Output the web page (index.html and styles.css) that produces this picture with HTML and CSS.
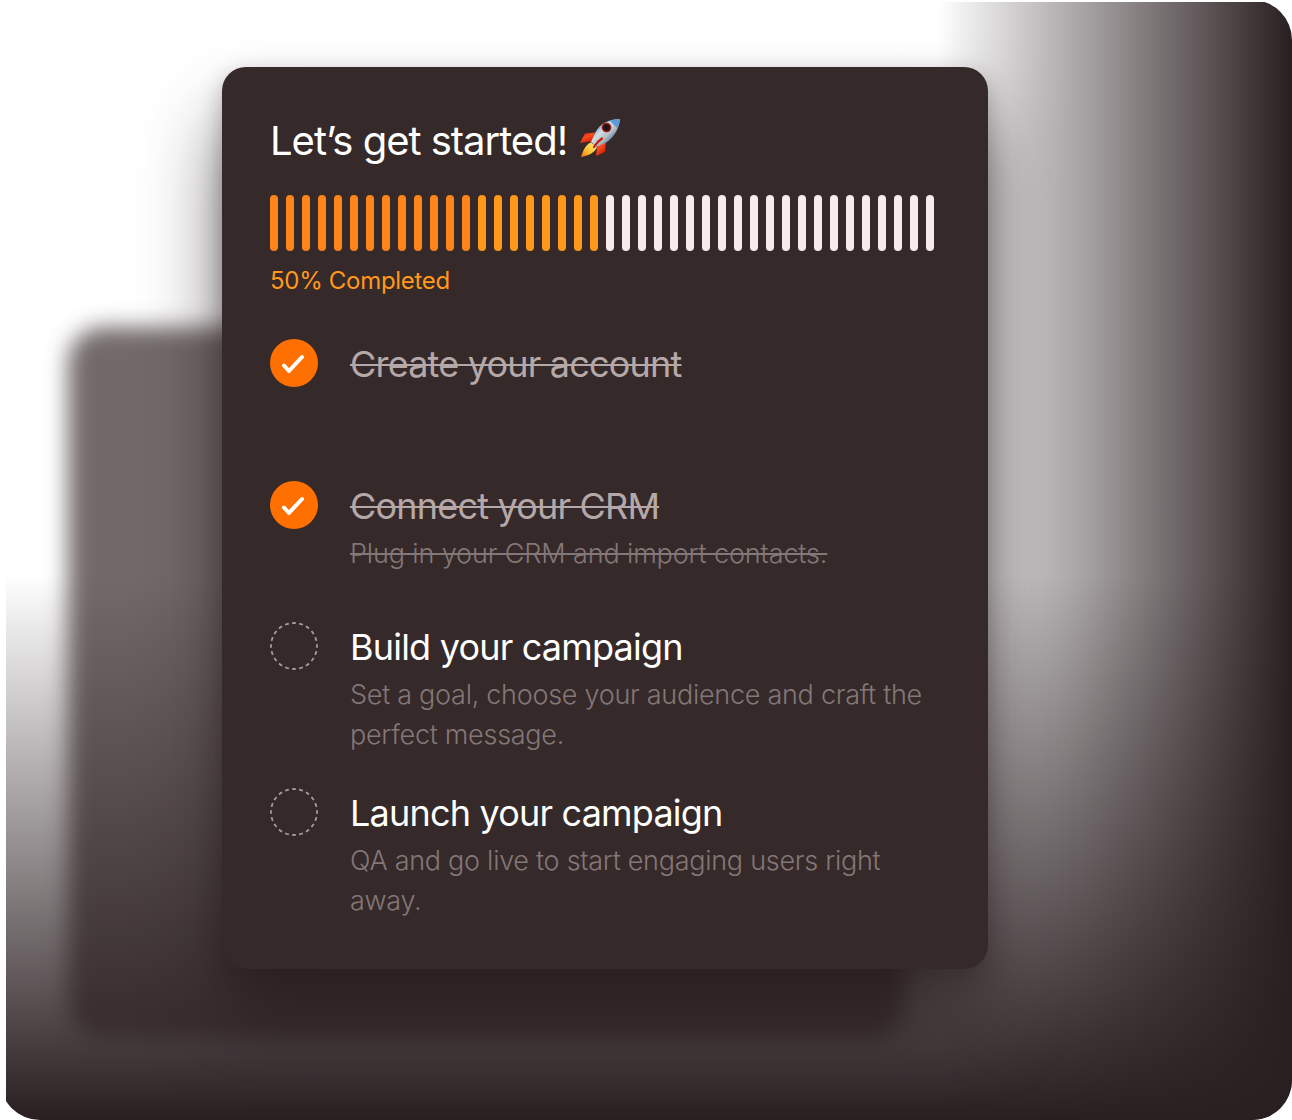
FILE: index.html
```html
<!DOCTYPE html>
<html lang="en">
<head>
    <meta charset="UTF-8">
    <meta name="viewport" content="width=device-width, initial-scale=1.0">
    <title>Let’s get started</title>
    <link rel="stylesheet" href="styles.css">
</head>
<body>
    <div class="stage">
        <div class="backdrop">
            <div class="fade fade-right"></div>
            <div class="fade fade-bottom"></div>
            <div class="ghost-card"></div>
        </div>

        <main class="card">
            <h1 class="title">
                <span>Let’s get started!</span>
                <svg class="rocket" viewBox="0 0 42 40" aria-hidden="true">
                    <defs>
                        <linearGradient id="hull" x1="0" y1="0" x2="1" y2="1">
                            <stop offset="0.15" stop-color="#3f7fc4"/>
                            <stop offset="0.4" stop-color="#d5dde2"/>
                            <stop offset="0.58" stop-color="#b4bdc2"/>
                            <stop offset="0.8" stop-color="#39699e"/>
                        </linearGradient>
                        <linearGradient id="fin" x1="0" y1="0" x2="0.6" y2="1">
                            <stop offset="0" stop-color="#d3200c"/>
                            <stop offset="0.5" stop-color="#ff4a1c"/>
                            <stop offset="1" stop-color="#c41c0a"/>
                        </linearGradient>
                        <linearGradient id="flame" x1="1" y1="0" x2="0" y2="1">
                            <stop offset="0" stop-color="#fff08a"/>
                            <stop offset="0.6" stop-color="#ffc02e"/>
                            <stop offset="1" stop-color="#f5701c"/>
                        </linearGradient>
                    </defs>
                    <path fill="url(#fin)" d="M16 14.500 6 15.500 1 25l9-1.500 3 1.500z"/>
                    <path fill="url(#fin)" d="M27 22l-1 12-9 4 1-8 3-5z"/>
                    <path fill="url(#flame)" d="M12 24.500C6 27 4 33 2 39c6-1 14-4 16-10z"/>
                    <path fill="url(#hull)" d="M41 1C30 1 21 6 16.500 14L12 24l6 5 10-5C36 18 40 10 41 1z"/>
                    <path fill="#5c9bd8" d="M41 1c-3.500 0-7 .6-10 2l7 7c1.800-3 3-6 3-9z"/>
                    <circle cx="27.500" cy="9.500" r="4.800" fill="#9b1712"/>
                    <circle cx="27.500" cy="9.500" r="3.300" fill="#1a1518"/>
                    <path fill="none" stroke="#c41c10" stroke-width="2.200" stroke-linecap="round" d="M23 20.500c-3 2-6 5-8 8.500"/>
                </svg>
            </h1>

            <div class="progress"></div>
            <p class="progress-label">50% Completed</p>

            <ul class="steps">
                <li class="step done">
                    <svg class="marker" viewBox="0 0 48 48">
                        <circle cx="24" cy="24" r="24" fill="#ff7000"/>
                        <path d="M14 26.500l5 5.500L32 18" fill="none" stroke="#fff" stroke-width="4" stroke-linecap="round" stroke-linejoin="round"/>
                    </svg>
                    <div class="step-body">
                        <h2><span>Create your account</span></h2>
                    </div>
                </li>
                <li class="step done">
                    <svg class="marker" viewBox="0 0 48 48">
                        <circle cx="24" cy="24" r="24" fill="#ff7000"/>
                        <path d="M14 26.500l5 5.500L32 18" fill="none" stroke="#fff" stroke-width="4" stroke-linecap="round" stroke-linejoin="round"/>
                    </svg>
                    <div class="step-body">
                        <h2><span>Connect your CRM</span></h2>
                        <p>Plug in your CRM and import contacts.</p>
                    </div>
                </li>
                <li class="step">
                    <svg class="marker" viewBox="0 0 48 48">
                        <circle class="ring" cx="24" cy="24" r="23" pathLength="80"/>
                    </svg>
                    <div class="step-body">
                        <h2>Build your campaign</h2>
                        <p>Set a goal, choose your audience and craft the<br>perfect message.</p>
                    </div>
                </li>
                <li class="step">
                    <svg class="marker" viewBox="0 0 48 48">
                        <circle class="ring" cx="24" cy="24" r="23" pathLength="80"/>
                    </svg>
                    <div class="step-body">
                        <h2>Launch your campaign</h2>
                        <p>QA and go live to start engaging users right<br>away.</p>
                    </div>
                </li>
            </ul>
        </main>
    </div>
    <script src="script.js"></script>
</body>
</html>
```
FILE: styles.css
```css
* {
    margin: 0;
    padding: 0;
    box-sizing: border-box;
}

:root {
    --card: #352929;
    --shade: #291e20;
    --orange: #ff8419;
    --amber: #ff981b;
    --rest: #f7ebec;
    --muted: #847777;
    --done: #b5a8a8;
}

body {
    background: #fff;
    color: #fff;
    font-family: 'Inter', 'Liberation Sans', sans-serif;
    overflow: hidden;
}

.stage {
    position: relative;
    width: 1292px;
    height: 1120px;
    padding: 67px 0 0 222px;
}

.backdrop {
    position: absolute;
    inset: 0;
    border-radius: 40px;
    overflow: hidden;
    clip-path: inset(2px 0 0 6px);
}

.fade {
    position: absolute;
    right: 0;
    bottom: 0;
}

.fade-right {
    top: 0;
    width: 354px;
    background: linear-gradient(to right, rgba(41, 30, 32, 0), var(--shade));
}

.fade-bottom {
    left: 0;
    height: 545px;
    background: linear-gradient(to bottom, rgba(41, 30, 32, 0), var(--shade));
}

.ghost-card {
    position: absolute;
    left: 68px;
    top: 327px;
    width: 837px;
    height: 712px;
    border-radius: 36px;
    background: rgba(47, 34, 36, 0.68);
    filter: blur(11px);
}

.card {
    position: relative;
    width: 766px;
    height: 902px;
    padding: 48px;
    border-radius: 24px;
    background: var(--card);
    box-shadow: 0 8px 22px rgba(35, 24, 26, 0.3), 0 54px 76px rgba(35, 24, 26, 0.62);
}

.title {
    display: flex;
    align-items: center;
    height: 50px;
    font-size: 40px;
    font-weight: 400;
    letter-spacing: -1.02px;
    white-space: nowrap;
}

.rocket {
    width: 42px;
    height: 40px;
    margin: -4px 0 0 12px;
}

.progress {
    display: flex;
    justify-content: space-between;
    height: 56px;
    margin: 30px 6px 0 0;
}

.bar {
    width: 8px;
    border-radius: 4px;
    background: var(--rest);
}

.bar.orange {
    background: var(--orange);
}

.bar.amber {
    background: var(--amber);
}

.progress-label {
    margin-top: 12px;
    font-size: 24px;
    line-height: 36px;
    color: var(--amber);
    letter-spacing: -0.3px;
}

.steps {
    display: grid;
    grid-template-rows: 142px 141px 166px auto;
    margin-top: 35px;
    list-style: none;
}

.step {
    display: flex;
    gap: 32px;
}

.marker {
    flex: none;
    width: 48px;
    height: 48px;
    margin-top: 4.5px;
}

.ring {
    fill: none;
    stroke: #a89c9c;
    stroke-width: 1.8;
    stroke-dasharray: 2.1 1.9;
    stroke-dashoffset: 1.05;
}

.step-body {
    white-space: nowrap;
}

.step h2 {
    height: 58px;
    font-size: 36px;
    font-weight: 400;
    line-height: 60px;
    letter-spacing: -0.8px;
}

.step p {
    font-size: 27px;
    font-weight: 300;
    line-height: 40px;
    letter-spacing: -0.28px;
    color: var(--muted);
}

.step.done p {
    letter-spacing: -0.13px;
}

.done h2 {
    color: var(--done);
}

.done h2 span,
.done p {
    text-decoration: line-through;
    text-decoration-thickness: 2px;
}
```
FILE: script.js
```js
const TOTAL = 42;
const progress = document.querySelector('.progress');

for (let i = 0; i < TOTAL; i++) {
    const bar = document.createElement('span');
    bar.className = 'bar' + (i < 13 ? ' orange' : i < 21 ? ' amber' : '');
    progress.appendChild(bar);
}
```
